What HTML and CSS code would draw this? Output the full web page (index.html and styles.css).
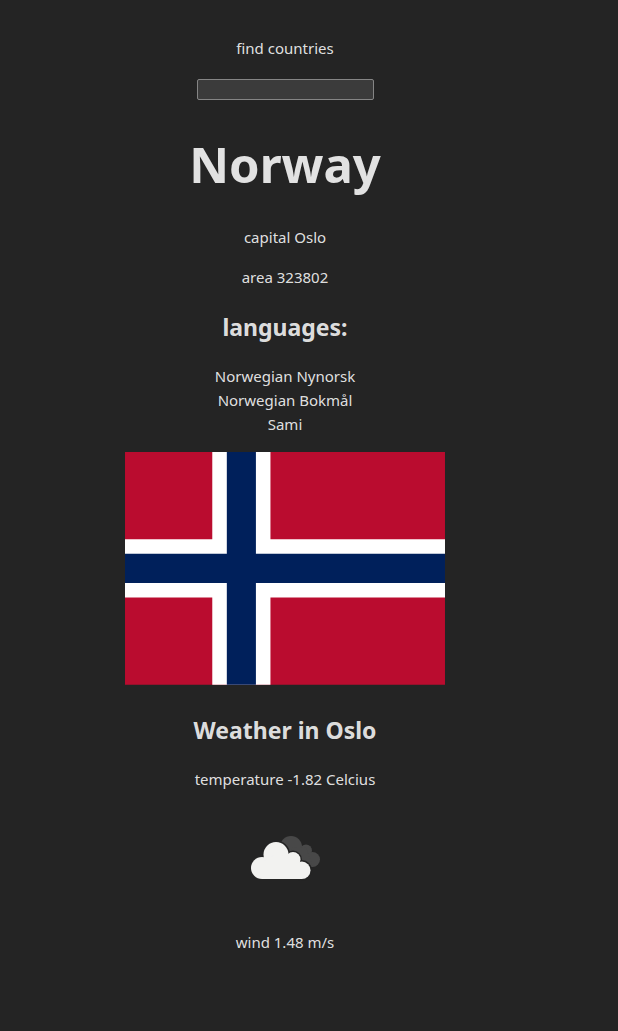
FILE: index.html
```html
<!DOCTYPE html>
<html lang="en">
<head>
<meta charset="utf-8">
<meta name="viewport" content="width=device-width, initial-scale=1">
<title>Countries</title>
<link rel="stylesheet" href="styles.css">
</head>
<body>
<main class="page">
  <form class="search">
    <label class="search-label" for="country">find countries</label>
    <input class="search-input" id="country" type="text">
  </form>
  <h1 class="country-name">Norway</h1>
  <p class="line">capital Oslo</p>
  <p class="line">area 323802</p>
  <h2 class="section-title">languages:</h2>
  <ul class="languages">
    <li>Norwegian Nynorsk</li>
    <li>Norwegian Bokmål</li>
    <li>Sami</li>
  </ul>
  <svg class="flag" viewBox="0 0 22 16" role="img" aria-label="Flag of Norway">
    <path fill="#ba0c2f" d="M0 0h22v16H0z"/>
    <path fill="#fff" d="M6 0h4v16H6zM0 6h22v4H0z"/>
    <path fill="#00205b" d="M7 0h2v16H7zM0 7h22v2H0z"/>
  </svg>
  <h2 class="section-title weather-title">Weather in Oslo</h2>
  <p class="line">temperature -1.82 Celcius</p>
  <svg class="weather-icon" viewBox="0 0 100 100" role="img" aria-label="Broken clouds">
    <g class="cloud-back">
      <circle cx="56" cy="40" r="11"/>
      <circle cx="71" cy="43.500" r="6"/>
      <circle cx="77.500" cy="52.500" r="7.500"/>
      <path d="M56 40L71 41L78 60L64 58z"/>
    </g>
    <g class="cloud-gap">
      <circle cx="41" cy="47.500" r="12.500"/>
      <circle cx="58" cy="52.500" r="7.500"/>
      <circle cx="66.800" cy="63.300" r="8.700"/>
    </g>
    <g class="cloud-front">
      <circle cx="27" cy="61" r="11"/>
      <circle cx="41" cy="47.500" r="12.500"/>
      <circle cx="58" cy="52.500" r="7.500"/>
      <circle cx="66.800" cy="63.300" r="8.700"/>
      <path d="M27 55L41 47L58 50L67 60V72H27z"/>
    </g>
  </svg>
  <p class="line">wind 1.48 m/s</p>
</main>
</body>
</html>
```
FILE: styles.css
```css
body {
  margin: 0;
  background: #242424;
  color: rgba(255, 255, 255, 0.87);
  font: 15px/24px "Noto Sans", "Open Sans", sans-serif;
}
.page {
  padding: 36px 80px 64px 32px;
  text-align: center;
}
.search {
  display: flex;
  flex-direction: column;
  align-items: center;
  gap: 19px;
}
.search-input {
  box-sizing: border-box;
  width: 177px;
  height: 21px;
  background: #3b3b3b;
  border: 1px solid #858585;
  border-radius: 2px;
  color: inherit;
}
.country-name {
  margin: 35px 0 32px;
  font-size: 49px;
  line-height: 58px;
}
.line {
  margin: 16px 0;
}
.section-title {
  margin: 20px 0 19px;
  font-size: 23px;
  line-height: 36px;
}
.languages {
  margin: 0 0 16px;
  padding: 0;
  list-style: none;
}
.flag {
  display: block;
  width: 320px;
  max-width: 100%;
  margin: 0 auto;
}
.weather-title {
  margin-top: 27px;
}
.weather-icon {
  display: block;
  width: 100px;
  margin: 0 auto 23px;
}
.cloud-back {
  fill: #484848;
}
.cloud-gap {
  fill: #242424;
  stroke: #242424;
  stroke-width: 3px;
}
.cloud-front {
  fill: #f2f2f0;
}
```
